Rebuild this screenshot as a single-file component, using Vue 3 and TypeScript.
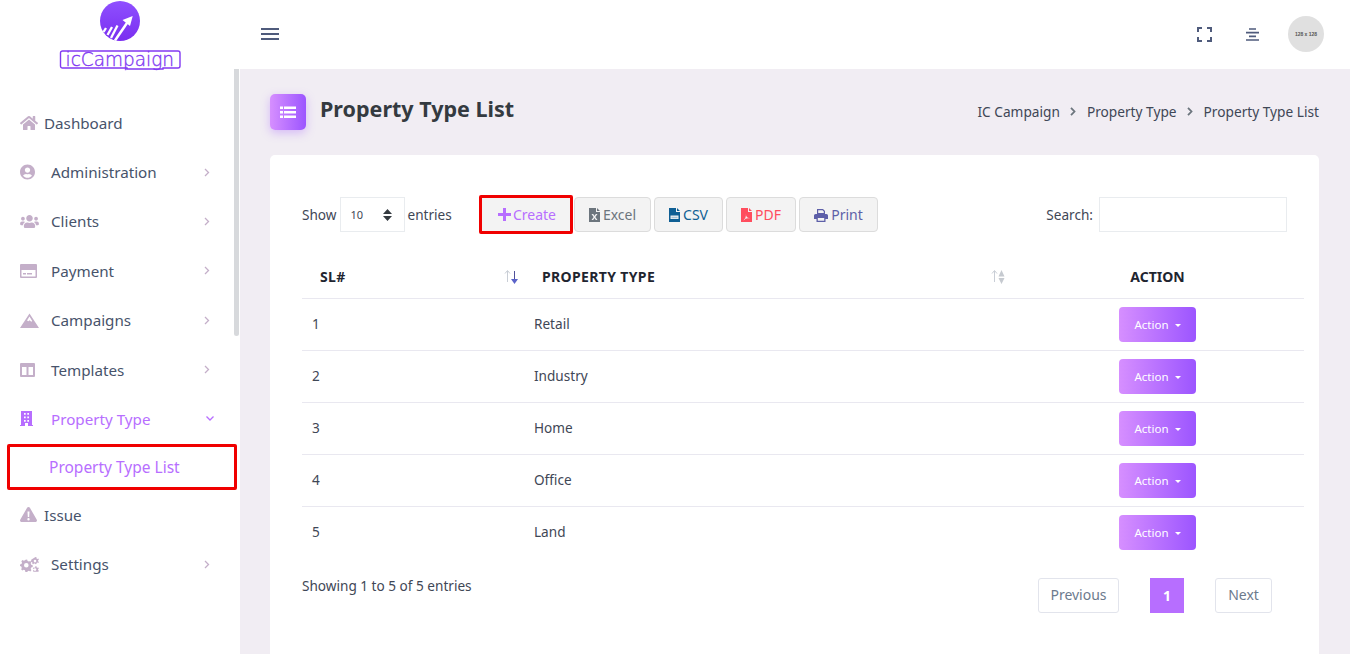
<script setup lang="ts">
interface Icon { box: string; w: number; h: number; d: string }
interface MenuItem { label: string; icon: Icon; arrow?: boolean; plain?: boolean; active?: boolean }

const home: Icon = { box: '0 0 576 512', w: 18, h: 16, d: 'M280.37 148.26L96 300.11V464a16 16 0 0 0 16 16l112.06-.29a16 16 0 0 0 15.92-16V368a16 16 0 0 1 16-16h64a16 16 0 0 1 16 16v95.64a16 16 0 0 0 16 16.05L464 480a16 16 0 0 0 16-16V300L295.67 148.26a12.19 12.19 0 0 0-15.3 0zM571.6 251.47L488 182.56V44.05a12 12 0 0 0-12-12h-56a12 12 0 0 0-12 12v72.61L318.47 43a48 48 0 0 0-61 0L4.34 251.47a12 12 0 0 0-1.6 16.9l25.5 31A12 12 0 0 0 45.15 301l235.22-193.74a12.19 12.19 0 0 1 15.3 0L530.9 301a12 12 0 0 0 16.9-1.6l25.5-31a12 12 0 0 0-1.7-16.93z' }
const user: Icon = { box: '0 0 496 512', w: 15, h: 16, d: 'M248 8C111 8 0 119 0 256s111 248 248 248 248-111 248-248S385 8 248 8zm0 96c48.6 0 88 39.4 88 88s-39.4 88-88 88-88-39.4-88-88 39.4-88 88-88zm0 344c-58.7 0-111.3-26.6-146.5-68.2 18.8-35.4 55.6-59.8 98.5-59.8 2.4 0 4.8.4 7.1 1.1 13 4.2 26.6 6.9 40.9 6.9 14.3 0 28-2.7 40.9-6.9 2.3-.7 4.7-1.1 7.1-1.1 42.9 0 79.7 24.4 98.5 59.8C359.3 421.4 306.7 448 248 448z' }
const users: Icon = { box: '0 0 640 512', w: 19, h: 15, d: 'M96 224c35.3 0 64-28.7 64-64s-28.7-64-64-64-64 28.7-64 64 28.7 64 64 64zm448 0c35.3 0 64-28.7 64-64s-28.7-64-64-64-64 28.7-64 64 28.7 64 64 64zm32 32h-64c-17.6 0-33.5 7.1-45.1 18.6 40.3 22.1 68.9 62 75.1 109.4h66c17.7 0 32-14.3 32-32v-32c0-35.3-28.7-64-64-64zm-256 0c61.9 0 112-50.1 112-112S381.9 32 320 32 208 82.1 208 144s50.1 112 112 112zm76.8 32h-8.3c-20.8 10-43.9 16-68.5 16s-47.6-6-68.5-16h-8.3C179.6 288 128 339.6 128 403.2V432c0 26.5 21.5 48 48 48h288c26.5 0 48-21.5 48-48v-28.8c0-63.6-51.6-115.2-115.2-115.2zm-223.7-13.4C161.5 263.1 145.6 256 128 256H64c-35.3 0-64 28.7-64 64v32c0 17.7 14.3 32 32 32h65.9c6.3-47.4 34.9-87.3 75.2-109.4z' }
const card: Icon = { box: '0 0 17 14', w: 17, h: 14, d: 'M1 0h15a1 1 0 0 1 1 1v12a1 1 0 0 1-1 1H1a1 1 0 0 1-1-1V1a1 1 0 0 1 1-1zM1.500 6v6.500h14V6zM3 9h3v1.500H3zM7 9h5v1.500H7z' }
const mountain: Icon = { box: '0 0 19 15', w: 19, h: 15, d: 'M9.500 0.500L19 15H0zM9.500 3.500L7 7.500l1.500.8 1.200-1 1.500 1.500 1-.8z' }
const columns: Icon = { box: '0 0 15 14', w: 15, h: 14, d: 'M1 0h13a1 1 0 0 1 1 1v12a1 1 0 0 1-1 1H1a1 1 0 0 1-1-1V1a1 1 0 0 1 1-1zM2 4v8h4.500V4zM8.500 4v8H13V4z' }
const building: Icon = { box: '0 0 13 15', w: 13, h: 15, d: 'M1 0h11v14h1v1H8v-3H5v3H0v-1h1zM4 2v1.800h1.700V2zM7.300 2v1.800H9V2zM4 5.500v1.800h1.700V5.500zM7.300 5.500v1.800H9V5.500zM4 9v1.800h1.700V9zM7.300 9v1.800H9V9z' }
const warning: Icon = { box: '0 0 17 15', w: 17, h: 15, d: 'M8.500 0c.6 0 1.100.3 1.400.8l6.900 12c.5 1-.2 2.200-1.400 2.200H1.600C.4 15-.3 13.800.2 12.800l6.900-12C7.400.3 7.900 0 8.500 0zM7.500 4.500l.3 5.500h1.400l.3-5.500zM8.500 11a1.200 1.200 0 1 0 0 2.400 1.200 1.200 0 0 0 0-2.400z' }
const cogs: Icon = { box: '0 0 19 15', w: 19, h: 15, d: 'M5.500 2.800l1.600-.3.500 1.500 1.300.6 1.400-.7 1.100 1.200-.7 1.400.5 1.300 1.500.5v1.700l-1.500.5-.5 1.300.7 1.400-1.100 1.200-1.400-.7-1.300.5-.5 1.500H5.500L5 13.300l-1.300-.5-1.400.7-1.200-1.200.7-1.400-.5-1.300L0 9.100V7.400l1.500-.5.500-1.300-.7-1.400 1.200-1.200 1.400.7L5 3.200zM6.300 6a2.300 2.300 0 1 0 0 4.600 2.300 2.300 0 0 0 0-4.600zM15.500 0l1 .3v1.100l.9.500 1-.4.500 1-.8.700v1l.8.700-.5 1-1-.4-.9.500v1.100l-1 .2-.6-.9h-1l-.6.9-1-.4.2-1.100-.7-.7-1 .2-.4-1 .8-.6v-1l.3-.1zM15 2.800a1.300 1.300 0 1 0 0 2.600 1.300 1.300 0 0 0 0-2.600zM15.500 9l1 .3v1l.9.500 1-.4.500 1-.8.700v1l.8.600-.5 1h-5l-.5-1 .8-.6v-1l-.8-.7.5-1 1 .4.900-.5zM15 11.300a1.300 1.300 0 1 0 0 2.600 1.300 1.300 0 0 0 0-2.600z' }

const menu: MenuItem[] = [
  { label: 'Dashboard', icon: home, plain: true },
  { label: 'Administration', icon: user, arrow: true },
  { label: 'Clients', icon: users, arrow: true },
  { label: 'Payment', icon: card, arrow: true },
  { label: 'Campaigns', icon: mountain, arrow: true },
  { label: 'Templates', icon: columns, arrow: true },
  { label: 'Property Type', icon: building, arrow: true, active: true },
]
const menuEnd: MenuItem[] = [
  { label: 'Issue', icon: warning, plain: true },
  { label: 'Settings', icon: cogs, arrow: true },
]
const rows = ['Retail', 'Industry', 'Home', 'Office', 'Land']
</script>

<template>
  <div class="app">
    <aside class="sidebar">
      <div class="logo">
        <svg width="122" height="72" viewBox="0 0 122 72">
          <defs>
            <linearGradient id="logoFill" x1="0" y1="0" x2="0" y2="1">
              <stop offset="0" stop-color="#8f50ff" />
              <stop offset="1" stop-color="#7a2ef0" />
            </linearGradient>
          </defs>
          <circle cx="61" cy="21" r="20" fill="url(#logoFill)" />
          <g stroke="#fff" stroke-width="2.300" fill="none">
            <path d="M44.500 32L47 28" />
            <path d="M48.500 35l4.500-8" />
            <path d="M52 38l6.500-12.500" />
            <path d="M56 40.500L69 21.500" stroke-width="2.500" />
          </g>
          <path d="M73.700 16L63.500 20l7.500 6z" fill="#fff" />
          <path d="M3.500 51H119a2 2 0 0 1 2 2v13a2 2 0 0 1-2 2h-15v1H68v-1H3.500a2 2 0 0 1-2-2V53a2 2 0 0 1 2-2z" fill="none" stroke="#8239f2" stroke-width="1.400" />
          <text x="6.500" y="65.500" class="logo-text" textLength="108.500" lengthAdjust="spacingAndGlyphs">icCampaign</text>
        </svg>
      </div>
      <nav class="nav">
        <a v-for="m in menu" :key="m.label" class="nav-item" :class="{ active: m.active, plain: m.plain }">
          <span class="nav-icon">
            <svg :width="m.icon.w" :height="m.icon.h" :viewBox="m.icon.box"><path :d="m.icon.d" fill="currentColor" fill-rule="evenodd" /></svg>
          </span>
          <span class="nav-label">{{ m.label }}</span>
          <svg v-if="m.arrow" class="chev" :class="{ down: m.active }" width="6" height="9" viewBox="0 0 6 9"><path d="M1 1l3.500 3.500L1 8" fill="none" stroke="currentColor" stroke-width="1.300" /></svg>
        </a>
        <a class="nav-sub">Property Type List</a>
        <a v-for="m in menuEnd" :key="m.label" class="nav-item" :class="{ plain: m.plain }">
          <span class="nav-icon">
            <svg :width="m.icon.w" :height="m.icon.h" :viewBox="m.icon.box"><path :d="m.icon.d" fill="currentColor" fill-rule="evenodd" /></svg>
          </span>
          <span class="nav-label">{{ m.label }}</span>
          <svg v-if="m.arrow" class="chev" width="6" height="9" viewBox="0 0 6 9"><path d="M1 1l3.500 3.500L1 8" fill="none" stroke="currentColor" stroke-width="1.300" /></svg>
        </a>
      </nav>
      <div class="scroll-thumb"></div>
    </aside>

    <div class="main">
      <header class="topbar">
        <span class="burger"><i></i><i></i><i></i></span>
        <div class="top-right">
          <svg width="15" height="15" viewBox="0 0 15 15"><path d="M1 5V1h4M10 1h4v4M14 10v4h-4M5 14H1v-4" fill="none" stroke="#4f5b7c" stroke-width="2" /></svg>
          <svg width="13" height="13" viewBox="0 0 13 13"><path d="M3 1h7M0 4.700h13M3 8.300h7M0 12h13" fill="none" stroke="#4f5b7c" stroke-width="1.700" /></svg>
          <span class="avatar">128 x 128</span>
        </div>
      </header>

      <section class="content">
        <div class="page-head">
          <div class="title-wrap">
            <span class="title-icon">
              <svg width="16" height="13" viewBox="0 0 16 13"><path d="M0 .5h3v2.500H0zM4 .5h12v2.500H4zM0 5h3v2.500H0zM4 5h12v2.500H4zM0 9.500h3V12H0zM4 9.500h12V12H4z" fill="#fff" /></svg>
            </span>
            <h1>Property Type List</h1>
          </div>
          <div class="crumbs">
            <span>IC Campaign</span>
            <svg width="6" height="9" viewBox="0 0 6 9"><path d="M1 .8l3.500 3.700L1 8.200" fill="none" stroke="#6c757d" stroke-width="1.800" /></svg>
            <span>Property Type</span>
            <svg width="6" height="9" viewBox="0 0 6 9"><path d="M1 .8l3.500 3.700L1 8.200" fill="none" stroke="#6c757d" stroke-width="1.800" /></svg>
            <span>Property Type List</span>
          </div>
        </div>

        <div class="card">
          <div class="toolbar">
            <div class="length">
              <span>Show</span>
              <span class="select">10
                <svg width="9" height="12" viewBox="0 0 9 12"><path d="M4.500 0L9 5H0zM0 7h9l-4.500 5z" fill="#343a40" /></svg>
              </span>
              <span>entries</span>
            </div>
            <div class="buttons">
              <button class="btn create">
                <svg width="13" height="13" viewBox="0 0 13 13"><path d="M6.500 0v13M0 6.500h13" stroke="#b76eff" stroke-width="3" /></svg>
                Create
              </button>
              <button class="btn excel">
                <svg width="11" height="14" viewBox="0 0 11 14"><path d="M0 0h7v4h4v10H0zM8 0l3 3H8zM2.500 6l2.200 3-2.200 3h1.700l1.300-1.900L6.800 12h1.700L6.300 9l2.200-3H6.800L5.500 7.900 4.200 6z" fill="#6c757d" fill-rule="evenodd" /></svg>
                Excel
              </button>
              <button class="btn csv">
                <svg width="11" height="14" viewBox="0 0 11 14"><path d="M0 0h7v4h4v10H0zM8 0l3 3H8zM1.500 7.500v3.500h8V7.500z" fill="#0f5f94" fill-rule="evenodd" /><path d="M2.500 9.200h6M2.500 9.800h6" stroke="#7fa9c7" stroke-width=".6" /></svg>
                CSV
              </button>
              <button class="btn pdf">
                <svg width="11" height="14" viewBox="0 0 11 14"><path d="M0 0h7v4h4v10H0zM8 0l3 3H8zM5 5.500c-.5 1.500.5 3 1.500 4 .7.500 2 .3 2.300.8-.8.200-2.800-.1-4.300.5-.7.500-1.300 1.400-2 1.700.3-.8 1.200-1.400 1.700-2.200.5-1 1-3.300.8-4.800z" fill="#ff4d5e" fill-rule="evenodd" /></svg>
                PDF
              </button>
              <button class="btn print">
                <svg width="14" height="14" viewBox="0 0 14 14"><path d="M3 1h6l2 2v3H3zM4.200 2.200v2.800h5.600V3.500L8.500 2.200zM1.500 6h11A1.500 1.500 0 0 1 14 7.500V11h-2.500v3h-9v-3H0V7.500A1.500 1.500 0 0 1 1.500 6zM3.800 10v2.800h6.400V10z" fill="#5d5fa8" fill-rule="evenodd" /></svg>
                Print
              </button>
            </div>
            <label class="search">Search: <span class="search-input"></span></label>
          </div>

          <table class="table">
            <colgroup><col class="c1" /><col class="c2" /><col class="c3" /></colgroup>
            <thead>
              <tr>
                <th>SL#
                  <svg class="sort s1" width="15" height="16" viewBox="0 0 15 16">
                    <path d="M3.500 13V2M1 4.500L3.500 1.500 6 4.500" fill="none" stroke="#c9ced6" stroke-width="1" />
                    <path d="M10.500 2v10" stroke="#50509a" stroke-width="1" />
                    <path d="M7 10h7l-3.500 5z" fill="#5b63c9" />
                  </svg>
                </th>
                <th>PROPERTY TYPE
                  <svg class="sort s2" width="15" height="16" viewBox="0 0 15 16">
                    <path d="M3.500 13V2M1 4.500L3.500 1.500 6 4.500" fill="none" stroke="#c9ced6" stroke-width="1" />
                    <path d="M7.500 7.500L10.500 1l3 6.500zM7.500 9l3 6 3-6z" fill="#c6cad0" />
                  </svg>
                </th>
                <th class="center">ACTION</th>
              </tr>
            </thead>
            <tbody>
              <tr v-for="(r, i) in rows" :key="r">
                <td>{{ i + 1 }}</td>
                <td>{{ r }}</td>
                <td class="center"><button class="action">Action <i class="caret"></i></button></td>
              </tr>
            </tbody>
          </table>

          <div class="foot">
            <span class="info">Showing 1 to 5 of 5 entries</span>
            <div class="pager">
              <a class="page-btn prev">Previous</a>
              <a class="page-num">1</a>
              <a class="page-btn next">Next</a>
            </div>
          </div>
        </div>
      </section>
    </div>
  </div>
</template>

<style scoped>
.app {
  display: flex;
  height: 654px;
  overflow: hidden;
  font-family: "Noto Sans", "Open Sans", sans-serif;
  color: #343a40;
  background: #f1edf3;
}
.sidebar {
  position: relative;
  width: 240px;
  flex: none;
  background: #fff;
}
.logo {
  height: 98px;
  padding-left: 59px;
  box-sizing: border-box;
}
.logo svg { display: block; }
.logo-text {
  font-family: "DejaVu Sans", sans-serif;
  font-weight: 200;
  font-size: 19px;
  fill: #8239f2;
  stroke: #8239f2;
  stroke-width: 0.35;
}
.nav-item {
  display: flex;
  align-items: center;
  box-sizing: border-box;
  height: 49.4px;
  padding: 0 30px 0 20px;
  color: #47536b;
  font-size: 15.2px;
}
.nav-icon {
  width: 31px;
  flex: none;
  display: flex;
  align-items: center;
  color: #c4afc9;
}
.nav-item.plain .nav-icon { width: 24px; }
.nav-label { flex: 1; }
.chev { color: #c4afc9; }
.chev.down { transform: rotate(90deg) translateY(-3px); }
.nav-item.active { padding-bottom: 1px; }
.nav-item.active, .nav-item.active .nav-icon, .nav-item.active .chev { color: #b76eff; }
.nav-sub {
  display: block;
  box-sizing: border-box;
  height: 46.5px;
  line-height: 40.5px;
  margin: 0 3px 0 7px;
  padding-left: 39px;
  border: 3px solid #f00000;
  border-radius: 2px;
  color: #b76eff;
  font-size: 15.5px;
}
.scroll-thumb {
  position: absolute;
  left: 234px;
  top: 69px;
  width: 5px;
  height: 267px;
  border-radius: 0 0 3px 3px;
  background: #d7d9dc;
}
.main {
  flex: 1;
  min-width: 0;
  display: flex;
  flex-direction: column;
}
.topbar {
  height: 69px;
  box-sizing: border-box;
  flex: none;
  display: flex;
  align-items: center;
  justify-content: space-between;
  padding: 0 26px 1px 21px;
  background: #fff;
}
.burger {
  width: 18px;
  display: flex;
  flex-direction: column;
  gap: 3px;
}
.burger i { display: block; height: 2px; background: #4f5b7c; }
.top-right {
  display: flex;
  align-items: center;
}
.top-right svg:first-child { margin-right: 34px; }
.top-right svg:nth-child(2) { margin-right: 29px; }
.avatar {
  width: 36px;
  height: 36px;
  border-radius: 50%;
  background: #e0e0e0;
  color: #555;
  font-family: "Liberation Sans", sans-serif;
  font-size: 5px;
  font-weight: 700;
  display: flex;
  align-items: center;
  justify-content: center;
}
.content {
  flex: 1;
  padding: 25px 31px 0 30px;
}
.page-head {
  display: flex;
  justify-content: space-between;
  align-items: center;
  height: 36px;
  margin-bottom: 25px;
}
.title-wrap { display: flex; align-items: center; gap: 14px; }
.title-icon {
  width: 36px;
  height: 36px;
  border-radius: 5px;
  display: flex;
  align-items: center;
  justify-content: center;
  background: linear-gradient(90deg, #d68fff, #9c55ff);
  box-shadow: 0 3px 10px rgba(160, 90, 255, .35);
}
h1 {
  margin: 0 0 7px;
  font-size: 21.5px;
  font-weight: 700;
  color: #343a40;
}
.crumbs {
  display: flex;
  align-items: center;
  gap: 10.5px;
  font-size: 13.7px;
  color: #3f4756;
  padding-bottom: 2px;
}
.card {
  height: 560px;
  box-sizing: border-box;
  background: #fff;
  border-radius: 5px;
  padding: 42px 15px 0 32px;
  font-size: 13.6px;
}
.toolbar {
  display: flex;
  align-items: center;
  height: 35px;
  padding-right: 17px;
}
.length { display: flex; align-items: center; gap: 3px; width: 177px; color: #3f4756; }
.select {
  box-sizing: border-box;
  width: 65px;
  height: 35px;
  border: 1px solid #e9ecef;
  display: flex;
  align-items: center;
  justify-content: space-between;
  padding: 0 12px 0 10px;
  font-size: 11px;
}
.buttons { display: flex; align-items: center; gap: 3px; }
.btn {
  box-sizing: border-box;
  height: 35px;
  display: flex;
  align-items: center;
  justify-content: center;
  gap: 3px;
  padding: 0;
  border: 1px solid #dcdcdc;
  border-radius: 4px;
  background: #f3f3f3;
  font-family: inherit;
  font-size: 14px;
}
.create { width: 94px; height: 39px; border: 3px solid #f00000; border-radius: 2px; margin-right: -2px; padding-left: 2px; gap: 2px; color: #b76eff; position: relative; }
.excel { width: 77px; color: #6c757d; }
.csv { width: 69px; color: #0f5f94; }
.pdf { width: 70px; color: #ff4d5e; }
.print { width: 79px; color: #5d5fa8; }
.search {
  margin-left: auto;
  display: flex;
  align-items: center;
  gap: 6px;
  color: #3f4756;
}
.search-input {
  width: 188px;
  height: 35px;
  box-sizing: border-box;
  border: 1px solid #e9ecef;
}
.table {
  width: 1002px;
  margin-top: 25px;
  border-collapse: collapse;
  table-layout: fixed;
}
.c1 { width: 222px; }
.c2 { width: 487px; }
.c3 { width: 293px; }
th {
  position: relative;
  box-sizing: border-box;
  height: 41px;
  padding: 0 18px 1px;
  text-align: left;
  font-size: 14px;
  letter-spacing: .35px;
  font-weight: 700;
  color: #1f2530;
  border-bottom: 1px solid #e9e8f0;
}
.sort { position: absolute; right: 5px; top: 12px; }
td {
  height: 52px;
  box-sizing: border-box;
  padding: 0 10px 2px;
  border-bottom: 1px solid #e9e8f0;
  color: #3f4756;
}
tbody tr:last-child td { border-bottom: 0; }
th.center { text-align: center; letter-spacing: 0; }
td.center { text-align: center; padding-bottom: 0; }
.action {
  width: 77px;
  height: 35px;
  padding: 0;
  border: 0;
  border-radius: 4px;
  background: linear-gradient(90deg, #d68fff, #9c55ff);
  color: #fff;
  font-family: inherit;
  font-size: 11.5px;
  vertical-align: middle;
}
.caret {
  display: inline-block;
  margin-left: 3px;
  vertical-align: 2px;
  border-top: 3.500px solid #fff;
  border-left: 3.500px solid transparent;
  border-right: 3.500px solid transparent;
}
.foot {
  display: flex;
  justify-content: space-between;
  align-items: flex-start;
  padding-right: 32px;
  margin-top: 20px;
  color: #3f4756;
}
.info { line-height: 16px; }
.pager { display: flex; align-items: center; font-size: 14px; }
.page-btn {
  box-sizing: border-box;
  height: 35px;
  line-height: 31px;
  text-align: center;
  border: 1px solid #e2e4ec;
  border-radius: 3px;
  color: #6c7a8d;
}
.prev { width: 81px; }
.next { width: 57px; }
.page-num {
  width: 34px;
  height: 35px;
  line-height: 35px;
  margin: 0 31px;
  text-align: center;
  background: #b76eff;
  color: #fff;
  font-weight: 700;
}
</style>
